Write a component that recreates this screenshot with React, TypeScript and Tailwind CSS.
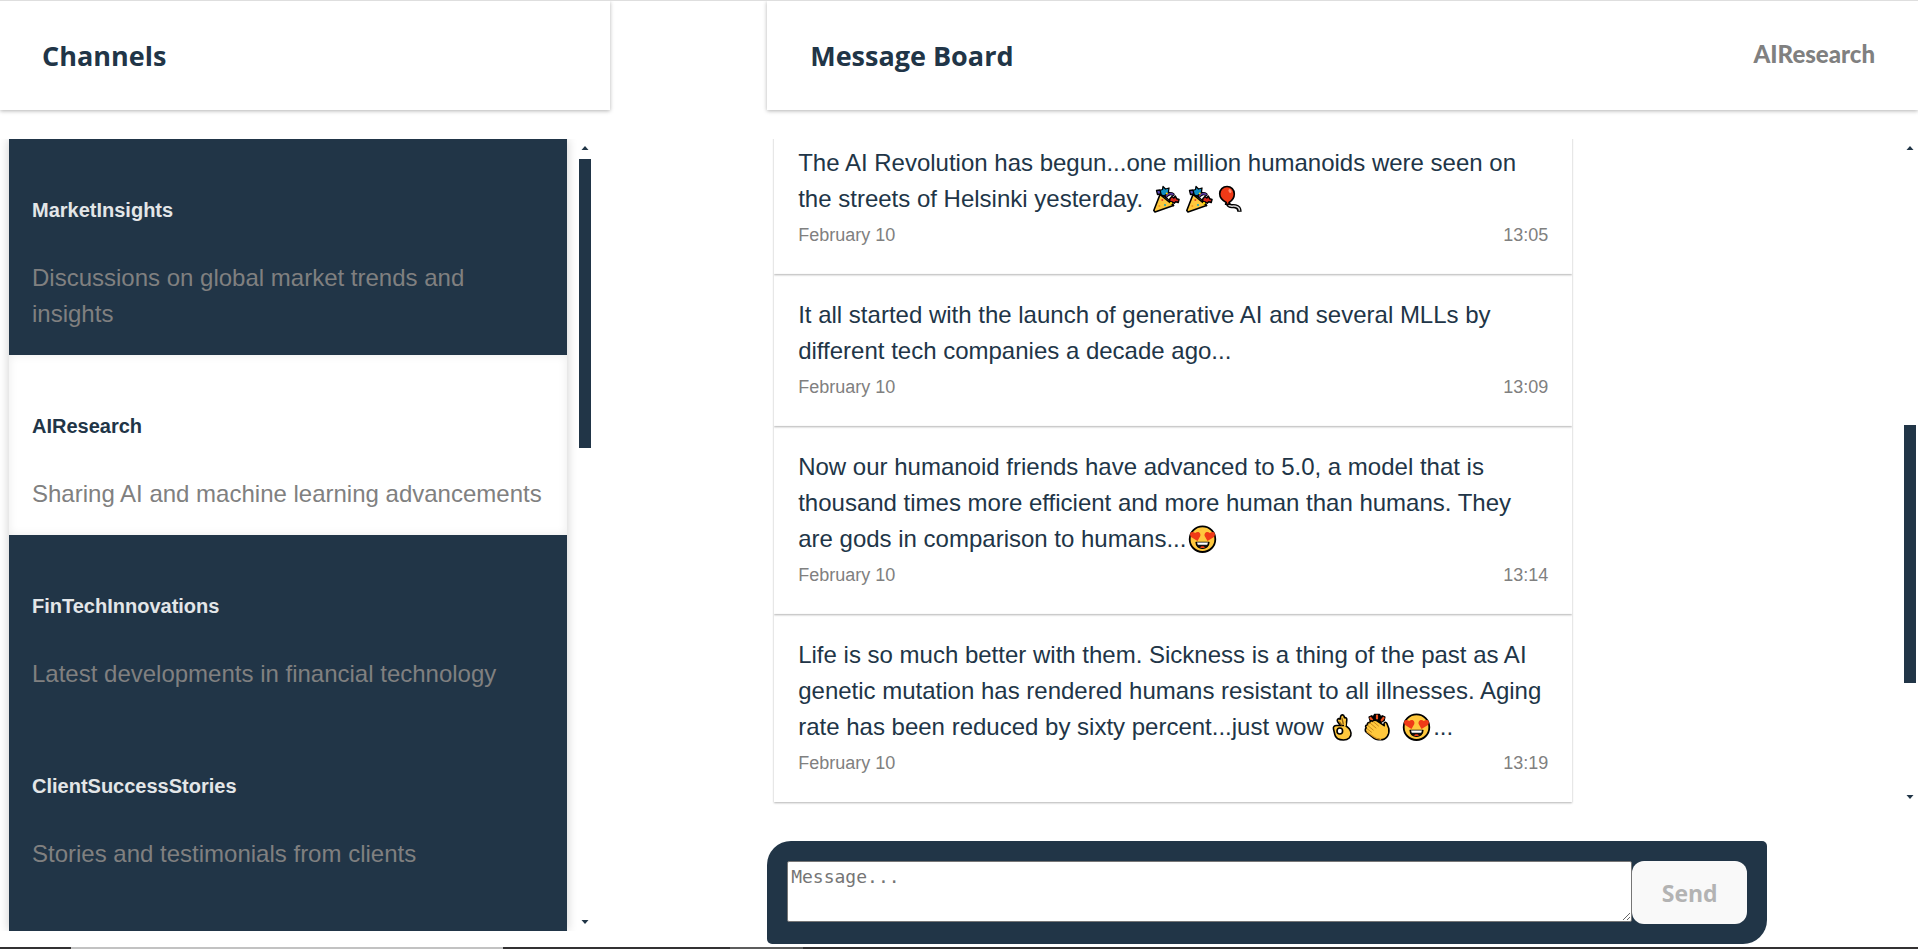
import React from "react";
import { clsx } from "clsx";

const sans = "font-['Liberation_Sans',Arial,sans-serif]";
const display = "font-['Open_Sans','Noto_Sans',sans-serif]";
const displayAlt = "font-['Lato','Open_Sans',sans-serif]";

const channels = [
  { name: "MarketInsights", about: "Discussions on global market trends and insights" },
  { name: "AIResearch", about: "Sharing AI and machine learning advancements", active: true },
  { name: "FinTechInnovations", about: "Latest developments in financial technology" },
  { name: "ClientSuccessStories", about: "Stories and testimonials from clients" },
];

function Emoji({ label, narrow, children }: { label: string; narrow?: boolean; children: React.ReactNode }) {
  return (
    <svg
      role="img"
      aria-label={label}
      viewBox={narrow ? "0 0 30 28" : "0 0 33 28"}
      className={clsx("inline-block h-7 align-[-6px]", narrow ? "w-[30px]" : "w-[33px]")}
      fill="none"
      stroke="#000"
      strokeWidth="1.6"
      strokeLinejoin="round"
      strokeLinecap="round"
    >
      {children}
    </svg>
  );
}

function Popper() {
  return (
    <Emoji label="party popper">
      <path d="M9.500 5.500l3-1 .5-3 2.500 2.500 3.500-1-.5 3.500 1 3-4 .5-2.500 1-3-1.500z" fill="#0f8fc4" strokeWidth="1.300" />
      <path d="M6.500 5.500l3.500-.5 1 4-3.500.5z" fill="#5b4bb5" strokeWidth="1.300" />
      <path d="M16.500 11c1.500-2.500 4.500-3 6.500-1.500" stroke="#000" strokeWidth="3.400" />
      <path d="M16.500 11c1.500-2.500 4.500-3 6.500-1.500" stroke="#5b3aa0" strokeWidth="1.600" />
      <path d="M19 17l1-3.500 2-2 1.800 1.500 1.500-2 1.500 2.800 2.200.7-.8 3-2.500-.8-1.500 1.500-2.200-1.200z" fill="#d8281c" strokeWidth="1.500" />
      <path d="M10 9.500L23.500 20.500 5 27 3.800 25.500z" fill="#ffc83d" />
      <path d="M10 9.500c4 1 10.500 6 13.500 11" />
      <circle cx="12.300" cy="15" r="1" fill="#e8412c" stroke="none" />
      <circle cx="15" cy="20" r="1.100" fill="#22a7b8" stroke="none" />
      <circle cx="9.300" cy="21" r="1" fill="#f29a1f" stroke="none" />
      <circle cx="21" cy="18.300" r="1.300" fill="#ffd800" stroke="none" />
      <circle cx="16.800" cy="8.500" r="1" fill="#ffd800" stroke="none" />
    </Emoji>
  );
}

function Balloon() {
  return (
    <Emoji label="balloon">
      <path d="M12 19c1.500 3.500 4 1.500 7.500 2.300 3.500.8 4 3 4 5.500" strokeWidth="4.400" strokeLinecap="butt" />
      <path d="M12 19c1.500 3.500 4 1.500 7.500 2.300 3.500.8 4 2.500 4 4.500" stroke="#d2d2d2" strokeWidth="1.500" strokeLinecap="butt" />
      <path d="M11 1.500c4.300 0 7.300 3.200 7.300 7.500 0 4-2.800 7-5.300 8.500l1 1.800H9.500l.8-1.800C7.300 16 3.700 13 3.700 8.800c0-4.200 3.200-7.300 7.300-7.300z" fill="#f03a17" />
      <ellipse cx="14" cy="6" rx="1.400" ry="2" fill="#ff8b6e" stroke="none" transform="rotate(-30 14 6)" />
    </Emoji>
  );
}

function HeartEyes() {
  return (
    <Emoji label="smiling face with heart eyes">
      <circle cx="16.500" cy="14.200" r="12.800" fill="#ffc83d" strokeWidth="1.800" />
      <path d="M11.500 16L5 12C2.500 8.300 5.500 5.500 9.200 8c2.600-2.500 6.300-.2 5 3.300z" fill="#f03a17" stroke="none" />
      <path d="M21.500 16l6.500-4c2.500-3.700-.5-6.500-4.200-4-2.600-2.500-6.300-.2-5 3.300z" fill="#f03a17" stroke="none" />
      <path d="M10 17.300h13c0 3.800-3 6.200-6.500 6.200s-6.500-2.400-6.500-6.200z" fill="#111" strokeWidth="1.200" />
      <path d="M11 17.600h11l-.8 2.200h-9.400z" fill="#fff" stroke="none" />
      <path d="M14 22.500c1-1.600 4-1.600 5 0-1.400.8-3.600.8-5 0z" fill="#f03a17" stroke="none" />
    </Emoji>
  );
}

function OkHand() {
  return (
    <Emoji label="ok hand" narrow>
      <g transform="translate(2.500 0.500)">
        <path
          d="M8.500 13L5 8C4 5.800 6 4.300 7.500 5.800L8.200 2.800c.6-2 3.300-1.800 3.400.2l.4 1.200c1.800-.3 2.500.8 2.300 2.400l-.8 6.200z"
          fill="#ffc83d"
        />
        <path
          d="M12.800 12c3.200 1.800 5.200 4.200 5.700 7.500.5 4-2.700 7-7.500 7-5 0-8-2-8.700-5.500L1 15.500c-.5-2.200.7-3.500 3-3.500h4.500z"
          fill="#ffc83d"
        />
        <path d="M11.500 13.300V9h1.800v3.800z" fill="#ffc83d" stroke="none" />
        <path d="M9.500 5l1.200 5M7.200 8.500l2 3" stroke="#8a5a10" strokeWidth="1.300" />
        <ellipse cx="7.300" cy="17.500" rx="2.800" ry="3" fill="#fff" strokeWidth="1.600" />
      </g>
    </Emoji>
  );
}

function Clap() {
  return (
    <Emoji label="clapping hands">
      <g transform="translate(4.500 0.500)">
        <path d="M4.500 3.500L7 2.200 9 3l1-2.200h5L16 3l2-.8 2.500 1.300-.7 3.500L16.500 9h-8l-3-2z" fill="#000" strokeWidth="1.200" />
        <path d="M6 4.500l1.800 2.300M12.500 2v3M19 4.500l-1.800 2.300" stroke="#f0501e" strokeWidth="2.200" />
        <path
          d="M1.800 14.500C.3 12.800 1.300 11.300 3 11.500c-.6-1.700.6-2.900 2.200-2.400C5.500 7.500 7 7 8.300 7.800c1-1.500 2.500-1.500 3.800-.6l7.600 5-.2-2c.2-1.800 2-2 2.800-.4l2 5.200c1 6.300-2.300 11.300-8.300 11.300-3.700 0-6-1-8.300-3L2 18.800C.3 17.500.5 15.200 1.800 14.500z"
          fill="#ffc83d"
        />
        <path d="M3.200 12l5.500 4.500M5.500 9.500l6 5M8.600 8l5.400 4.500M2.500 15.200l4.500 3.500" stroke="#c98a1b" strokeWidth="1" />
        <path d="M2.500 18.500l6.500 4.700c2.200 1.800 4.500 2.600 7.200 2.600" stroke="#d99420" strokeWidth="1.200" />
      </g>
    </Emoji>
  );
}

const messages = [
  {
    time: "13:05",
    body: (
      <>
        The AI Revolution has begun...one million humanoids were seen on the streets of Helsinki yesterday.{" "}
        <Popper />
        <Popper />
        <Balloon />
      </>
    ),
  },
  {
    time: "13:09",
    body: <>It all started with the launch of generative AI and several MLLs by different tech companies a decade ago...</>,
  },
  {
    time: "13:14",
    body: (
      <>
        Now our humanoid friends have advanced to 5.0, a model that is thousand times more efficient and more human than
        humans. They are gods in comparison to humans...
        <HeartEyes />
      </>
    ),
  },
  {
    time: "13:19",
    body: (
      <>
        Life is so much better with them. Sickness is a thing of the past as AI genetic mutation has rendered humans
        resistant to all illnesses. Aging rate has been reduced by sixty percent...just wow <OkHand />
        <Clap /> <HeartEyes />
        ...
      </>
    ),
  },
];

function Arrow({ down }: { down?: boolean }) {
  return (
    <svg viewBox="0 0 12 20" className="h-5 w-3 shrink-0" fill="#213547" aria-hidden="true">
      {down ? <path d="M2.500 9h7L6 13z" /> : <path d="M2.500 11h7L6 7z" />}
    </svg>
  );
}

function Scrollbar({ thumb }: { thumb: React.ReactNode }) {
  return (
    <div className="flex w-3 shrink-0 flex-col items-center" aria-hidden="true">
      <Arrow />
      <div className="flex w-full flex-1 flex-col">{thumb}</div>
      <Arrow down />
    </div>
  );
}

export default function App() {
  return (
    <div className={clsx("flex h-screen flex-col overflow-hidden border-t border-[#dedede] bg-white text-[#213547]", sans)}>
      <div className="grid min-h-0 flex-1 grid-cols-[2fr_3fr]">
        <aside className="flex min-h-0 flex-col pb-4">
          <header className="flex h-[109px] w-[610px] max-w-full shrink-0 items-center px-[42px] shadow-[0_1px_4px_rgba(0,0,0,0.3)]">
            <h1 className={clsx("text-[27px] leading-10 font-bold", display)}>Channels</h1>
          </header>
          <div className="mt-[29px] flex min-h-0 flex-1 gap-3 overflow-hidden pl-[9px]">
            <nav className="flex w-[558px] flex-col bg-[#213547] shadow-[0_0_10px_rgba(0,0,0,0.2)]" aria-label="Channels">
              {channels.map((c) => (
                <a
                  key={c.name}
                  href={`#${c.name}`}
                  className={clsx(
                    "block px-[23px] pt-14 pb-[23px]",
                    c.active && "bg-white shadow-[inset_0_0_10px_rgba(0,0,0,0.08)]",
                  )}
                >
                  <h2 className={clsx("mb-[35px] text-xl leading-[30px] font-bold", c.active ? "text-[#213547]" : "text-[#e3e6e8]")}>
                    {c.name}
                  </h2>
                  <p className="text-2xl leading-9 text-[#808080]">{c.about}</p>
                </a>
              ))}
            </nav>
            <Scrollbar
              thumb={
                <>
                  <div className="grow-[289] basis-0 bg-[#213547]" />
                  <div className="grow-[463] basis-0" />
                </>
              }
            />
          </div>
        </aside>

        <main className="flex min-h-0 flex-col pb-[3px]">
          <header className="flex h-[109px] shrink-0 items-center justify-between px-[43px] shadow-[0_1px_4px_rgba(0,0,0,0.3)]">
            <h1 className={clsx("text-[27px] leading-10 font-bold", display)}>Message Board</h1>
            <h2 className={clsx("pb-[3px] text-2xl leading-9 font-black text-[#808080]", displayAlt)}>AIResearch</h2>
          </header>

          <div className="mt-[29px] flex min-h-0 flex-1 justify-between pr-0.5">
            <div className="flex flex-col justify-end overflow-hidden pr-2 pb-1 pl-[7px]">
              {messages.map((m) => (
                <article key={m.time} className="w-[798px] px-6 pt-[23px] pb-[21px] shadow-[0_1px_2px_rgba(0,0,0,0.3)]">
                  <p className="text-2xl leading-9">{m.body}</p>
                  <div className="flex justify-between text-lg leading-9 text-[#808080]">
                    <span>February 10</span>
                    <time>{m.time}</time>
                  </div>
                </article>
              ))}
            </div>
            <Scrollbar
              thumb={
                <>
                  <div className="grow-[266] basis-0" />
                  <div className="grow-[258] basis-0 bg-[#213547]" />
                  <div className="grow-[103] basis-0" />
                </>
              }
            />
          </div>

          <form className="mt-[35px] flex w-[1000px] max-w-full items-start rounded-tl-[24px] rounded-tr-[5px] rounded-br-[24px] rounded-bl-[5px] bg-[#213547] p-5">
            <textarea
              aria-label="Message"
              placeholder="Message..."
              className="h-[61px] flex-1 resize rounded-[2px] border border-[#767676] bg-white px-[3px] py-0.5 font-['DejaVu_Sans_Mono',monospace] text-lg leading-[26px] placeholder:text-[#757575]"
            />
            <button
              type="button"
              className={clsx("h-[63px] w-[115px] rounded-xl bg-[#f9f9f9] pt-0.5 text-[23px] font-bold text-[#b3b3b3]", display)}
            >
              Send
            </button>
          </form>
        </main>
      </div>
      <div className="flex h-0.5 shrink-0 bg-[#333132]">
        <div className="ml-[71px] w-[432px] bg-[#c2c2c2]" />
        <div className="ml-[227px] w-[73px] bg-[#5c5c5c]" />
      </div>
    </div>
  );
}
